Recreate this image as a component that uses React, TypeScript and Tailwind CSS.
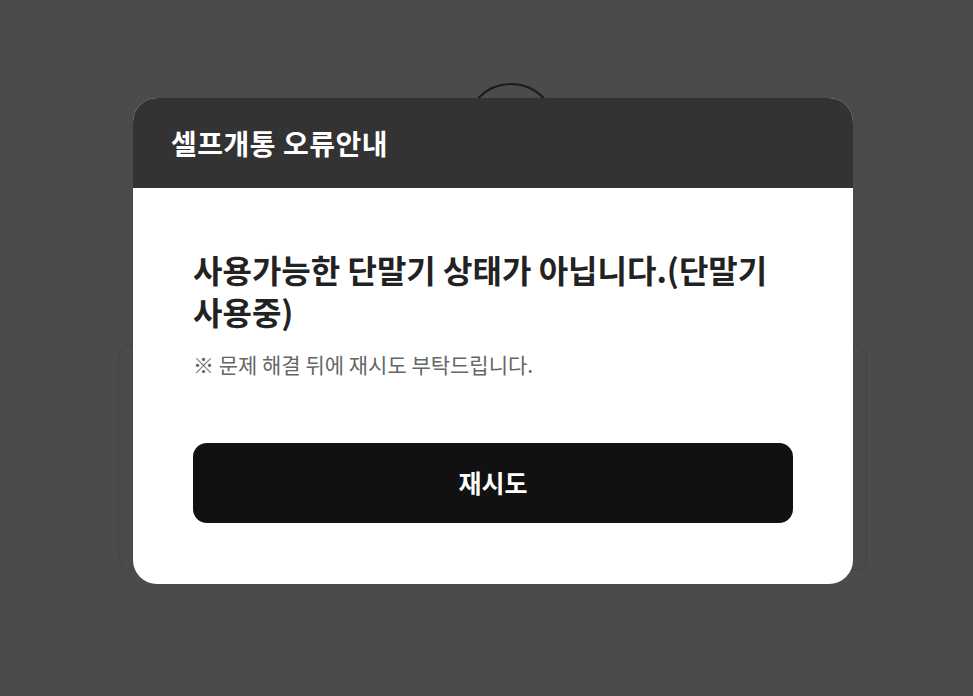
import React from 'react';

const font = { fontFamily: '"Noto Sans CJK KR", "Noto Sans", sans-serif' };

function Backdrop() {
  return (
    <div className="flex flex-col items-center pt-[83px]">
      <div className="ml-[49px] w-[92px] h-[92px] rounded-full border-2 border-[#1c1c1c]" />
      <div className="ml-[12px] mt-[170px] w-[749px] h-[225px] rounded-xl border border-[#424242]" />
    </div>
  );
}

function ErrorModal() {
  return (
    <div className="absolute left-[133px] top-[98px] w-[720px] rounded-[24px] overflow-hidden bg-white">
      <div className="h-[90px] bg-[#333333] px-[38px] flex items-center">
        <h1 className="text-[28px] font-bold text-white tracking-[0.5px]">셀프개통 오류안내</h1>
      </div>
      <div className="px-[60px] pt-[60px] pb-[61px]">
        <p className="text-[32px] leading-[42px] font-bold text-[#222222] break-keep">
          사용가능한 단말기 상태가 아닙니다.(단말기 사용중)
        </p>
        <p className="mt-[18px] text-[21px] leading-[28px] text-[#666666]">
          ※ 문제 해결 뒤에 재시도 부탁드립니다.
        </p>
        <button className="mt-[65px] w-full h-[80px] rounded-[14px] bg-[#111111] text-white text-[25px] font-bold">
          재시도
        </button>
      </div>
    </div>
  );
}

export default function App() {
  return (
    <div className="relative w-full h-[696px] bg-[#4b4b4b] overflow-hidden" style={font}>
      <Backdrop />
      <ErrorModal />
    </div>
  );
}
